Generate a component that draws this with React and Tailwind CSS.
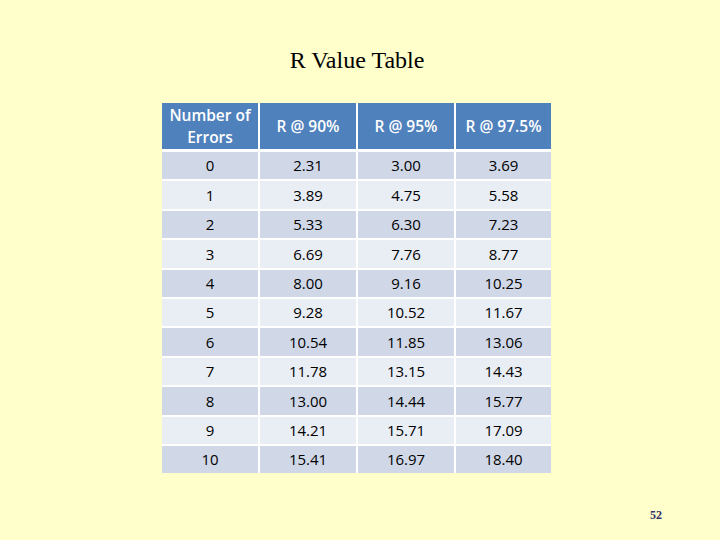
import React from "react";

const rows = [
  ["0", "2.31", "3.00", "3.69"],
  ["1", "3.89", "4.75", "5.58"],
  ["2", "5.33", "6.30", "7.23"],
  ["3", "6.69", "7.76", "8.77"],
  ["4", "8.00", "9.16", "10.25"],
  ["5", "9.28", "10.52", "11.67"],
  ["6", "10.54", "11.85", "13.06"],
  ["7", "11.78", "13.15", "14.43"],
  ["8", "13.00", "14.44", "15.77"],
  ["9", "14.21", "15.71", "17.09"],
  ["10", "15.41", "16.97", "18.40"],
];

const headers = ["Number of Errors", "R @ 90%", "R @ 95%", "R @ 97.5%"];

export default function App() {
  return (
    <div className="w-[720px] h-[540px] bg-[#ffffcc] flex flex-col relative overflow-hidden">
      <h1 className="mt-[40px] h-[40px] text-center text-[24px] leading-[40px] text-black mr-[6px] font-['Liberation_Serif',serif]">
        R Value Table
      </h1>
      <div className="ml-[162px] mt-[23px] w-[389px] bg-white flex flex-col gap-[3px] font-['Open_Sans',sans-serif]">
        <div className="grid grid-cols-[96px_96px_96px_95px] gap-[2px] h-[46px]">
          {headers.map((h) => (
            <div
              key={h}
              className="bg-[#4f81bd] text-white text-[15.5px] leading-[22px] font-semibold flex items-center justify-center text-center"
            >
              {h === "Number of Errors" ? (
                <span>
                  Number of
                  <br />
                  Errors
                </span>
              ) : (
                h
              )}
            </div>
          ))}
        </div>
        <div className="flex flex-col gap-[2px]">
          {rows.map((r, i) => (
            <div
              key={r[0]}
              className="grid grid-cols-[96px_96px_96px_95px] gap-[2px] h-[27.4px]"
            >
              {r.map((c, j) => (
                <div
                  key={j}
                  className={`${
                    i % 2 === 0 ? "bg-[#d0d8e8]" : "bg-[#e9edf4]"
                  } flex items-center justify-center text-[15px] text-black`}
                >
                  {c}
                </div>
              ))}
            </div>
          ))}
        </div>
      </div>
      <div className="absolute left-[650px] top-[506px] text-[12px] font-bold text-[#333366] font-['Liberation_Serif',serif]">
        52
      </div>
    </div>
  );
}
